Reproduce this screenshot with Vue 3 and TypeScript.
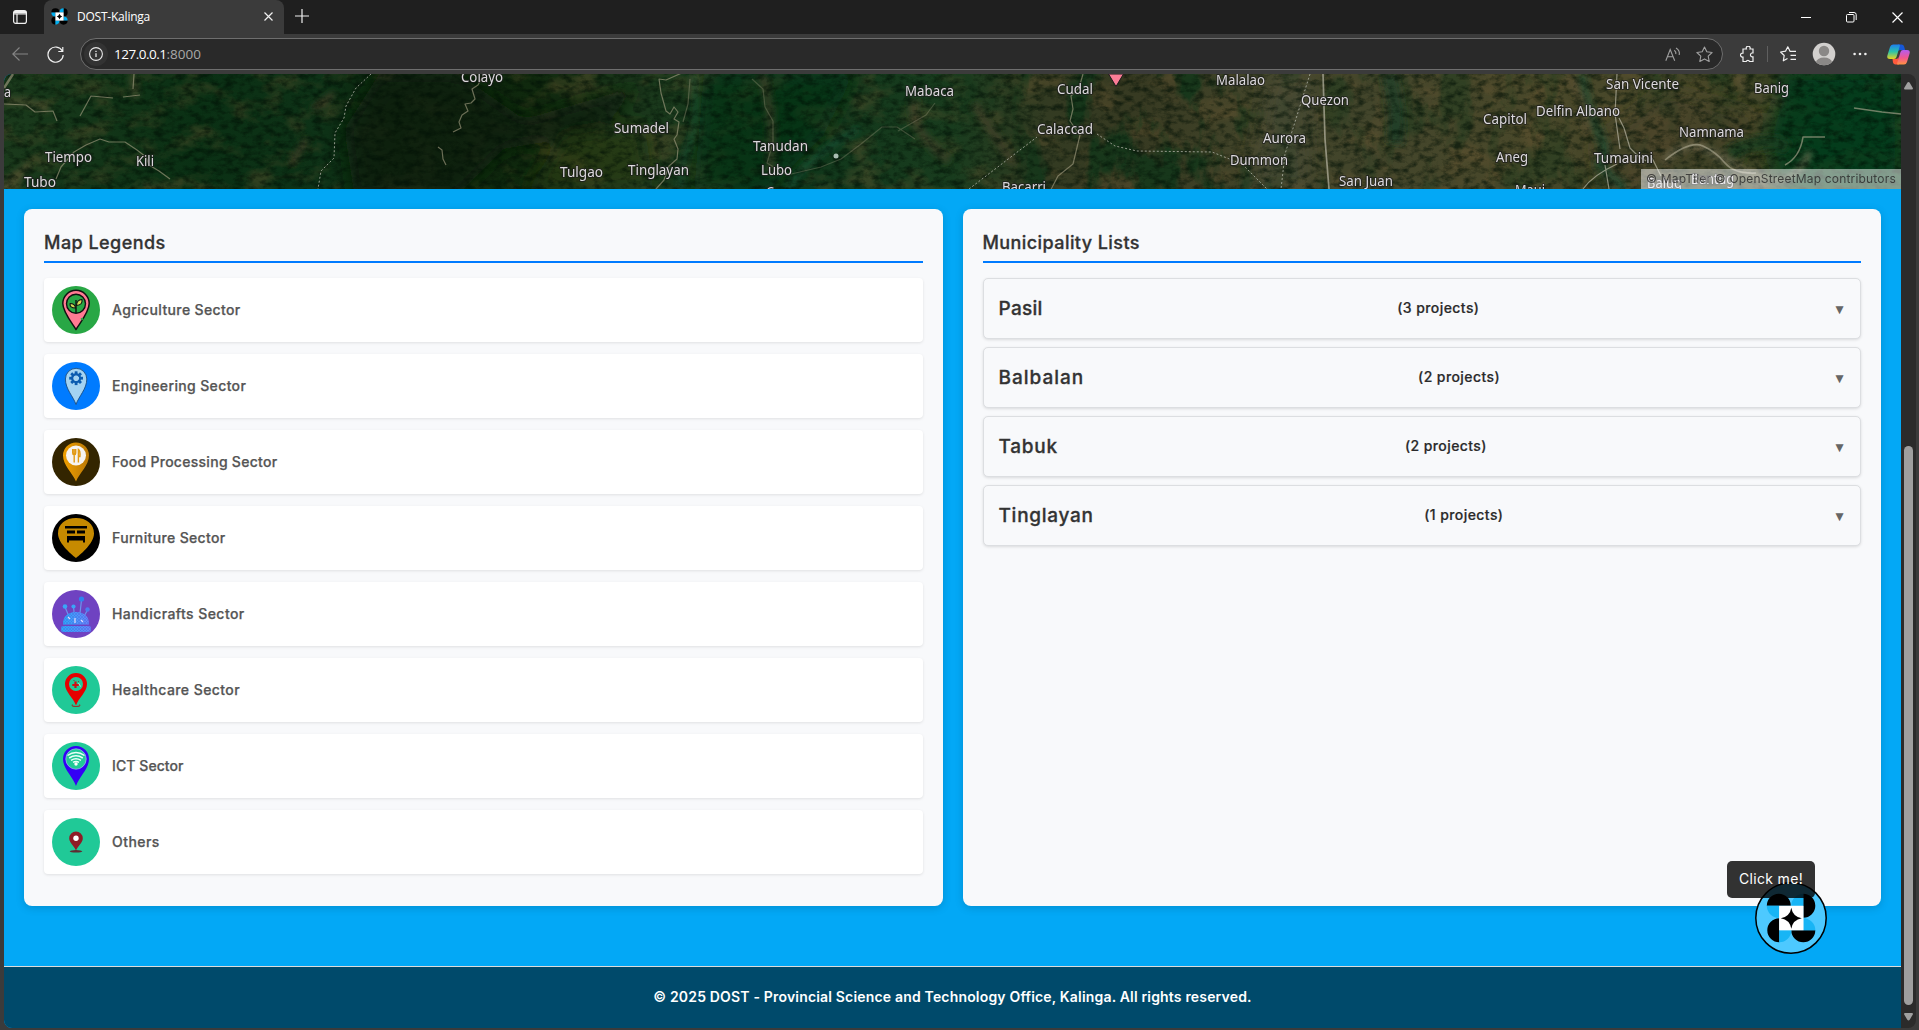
<script setup lang="ts">
interface Sector { id: string; name: string; bg: string; track: number }
interface Town { name: string; count: number; track: number }
interface Place { label: string; x: number; y: number; w: number }

const sectors: Sector[] = [
  { id: 'agri', name: 'Agriculture Sector', bg: '#28a745', track: 0.37 },
  { id: 'eng', name: 'Engineering Sector', bg: '#007bff', track: 0.36 },
  { id: 'food', name: 'Food Processing Sector', bg: '#332500', track: 0.28 },
  { id: 'furn', name: 'Furniture Sector', bg: '#000000', track: 0.36 },
  { id: 'hand', name: 'Handicrafts Sector', bg: '#6f42c1', track: 0.43 },
  { id: 'health', name: 'Healthcare Sector', bg: '#20c997', track: 0.43 },
  { id: 'ict', name: 'ICT Sector', bg: '#20c997', track: 0.08 },
  { id: 'other', name: 'Others', bg: '#20c997', track: 0.45 },
]
const towns: Town[] = [
  { name: 'Pasil', count: 3, track: 0.3 },
  { name: 'Balbalan', count: 2, track: 0.98 },
  { name: 'Tabuk', count: 2, track: 0.75 },
  { name: 'Tinglayan', count: 1, track: 0.72 },
]
const place = (label: string, x: number, y: number, w: number): Place => ({ label, x, y, w })
const places: Place[] = [
  place('a', 0, 23, 7), place('Tiempo', 41, 88, 47), place('Kili', 132, 92, 18), place('Tubo', 20, 113, 32),
  place('Colayo', 457, 8, 42), place('Sumadel', 610, 59, 55), place('Tanudan', 749, 77, 55), place('Lubo', 757, 101, 31),
  place('Tulgao', 556, 102.5, 43), place('Tinglayan', 624, 101, 61), place('Mabaca', 901, 22, 49), place('C', 762, 123, 8),
  place('Cudal', 1053, 20, 36), place('Calaccad', 1033, 60, 56), place('Malalao', 1212, 11, 49), place('Quezon', 1297, 31, 48),
  place('Aurora', 1259, 69, 43), place('Dummon', 1226, 91, 58), place('San Juan', 1335, 112, 54), place('Capitol', 1479, 50, 44),
  place('Delfin Albano', 1532, 42, 84), place('Aneg', 1492, 88, 32), place('Maui', 1511, 121, 30), place('Bacarri', 998, 118, 44),
  place('San Vicente', 1602, 14.5, 73), place('Banig', 1750, 18.5, 35), place('Namnama', 1675, 63, 65), place('Tumauini', 1590, 88.5, 59),
  place('Baluq', 1643, 114, 35), place('Bantug', 1687, 109.5, 43),
]
const gearTeeth = [0, 45, 90, 135, 180, 225, 270, 315]
</script>

<template>
  <div class="window">
    <header class="tabstrip">
      <svg class="workspaces" width="16" height="16" viewBox="0 0 16 16" fill="none" stroke="#f0f0f0" stroke-width="1.2">
        <rect x="1.6" y="1.6" width="12.8" height="12.8" rx="2.2" /><path d="M1.6 3.6h12.8M1.6 5h12.8M5 5v9.4" />
        <path d="M2 3h12" stroke-width="2" />
      </svg>
      <div class="tab">
        <svg class="favicon" width="17" height="17" viewBox="0 0 50 50">
          <path fill="#000" d="M1 13a12 12 0 0 1 24 0zM37 1a12 12 0 0 1 0 24zM49 37a12 12 0 0 1-24 0zM13 49a12 12 0 0 1 0-24z" />
          <path fill="#00aeef" d="M1 13h12v12A12 12 0 0 1 1 13zM37 1v12H25A12 12 0 0 1 37 1zM49 37H37V25a12 12 0 0 1 12 12zM13 49V37h12a12 12 0 0 1-12 12z" />
          <rect x="13" y="13" width="24" height="24" fill="#fff" /><path fill="#000" d="M25 17l3 5 5 3-5 3-3 5-3-5-5-3 5-3z" />
        </svg>
        <span class="tab-title">DOST-Kalinga</span>
        <svg width="9" height="9" viewBox="0 0 9 9" stroke="#f0f0f0" stroke-width="1.2"><path d="M.5.5l8 8M8.500.5l-8 8" /></svg>
      </div>
      <svg class="newtab" width="14" height="14" viewBox="0 0 14 14" stroke="#f0f0f0" stroke-width="1.2"><path d="M7 0v14M0 7h14" /></svg>
      <div class="winbtns">
        <svg width="10" height="11" viewBox="0 0 10 11" stroke="#fff"><path d="M0 5.500h10" /></svg>
        <svg width="11" height="11" viewBox="0 0 11 11" fill="none" stroke="#fff"><rect x=".5" y="2.500" width="7.500" height="7.500" rx="1" /><path d="M3 .5h5a2.200 2.200 0 0 1 2.200 2.200V8" /></svg>
        <svg width="11" height="11" viewBox="0 0 11 11" stroke="#fff" stroke-width="1.200"><path d="M.5.5l10 10M10.500.5l-10 10" /></svg>
      </div>
    </header>

    <div class="toolbar">
      <svg class="back" width="16" height="14" viewBox="0 0 16 14" fill="none" stroke="#858585" stroke-width="1.100"><path d="M7.500.5L.8 7l6.700 6.500M.8 7H16" /></svg>
      <svg class="reload" width="18" height="17" viewBox="0 0 18 17" fill="none" stroke="#f0f0f0" stroke-width="1.200"><path d="M15.300 5A7.600 7.600 0 1 0 16.200 9M15.800 1v4.500H11.300" /></svg>
      <div class="address">
        <span class="info">
          <svg width="14" height="14" viewBox="0 0 14 14" fill="none" stroke="#e8e8e8"><circle cx="7" cy="7" r="6.400" stroke-width="1.100" /><path d="M7 6.300V10" stroke-width="1.300" /><circle cx="7" cy="4.300" r=".4" /></svg>
        </span>
        <span class="url"><span class="host">127.0.0.1</span><span class="port">:8000</span></span>
        <svg class="read" width="16" height="15" viewBox="0 0 16 15" fill="none" stroke="#a0a0a0" stroke-width="1.100"><path d="M.8 13.800L5.200 2.500l4.500 11.300M2.400 9.800h5.700M9.300 3.200Q11.300 4.800 10.800 7.200M11 1q4.200 2.600 3.200 7" /></svg>
        <svg class="star" width="17" height="17" viewBox="0 0 17 17" fill="none" stroke="#a0a0a0" stroke-width="1.100" stroke-linejoin="round"><path d="M8.500 1l2.300 4.800 5.300.7-3.900 3.700 1 5.300-4.700-2.600-4.700 2.600 1-5.300L.9 6.500l5.300-.7z" /></svg>
      </div>
      <svg class="ext" width="16" height="17" viewBox="0 0 16 17" fill="none" stroke="#f0f0f0" stroke-width="1.200"><path d="M3 3h3.400a2 2 0 1 1 3.600 0H13v4h-1.200a2 2 0 0 0 0 3.800H13v4.700H9.600a1.800 1.800 0 0 0-3.400 0H3v-4.400H2.500a2 2 0 1 1 0-4H3z" /></svg>
      <span class="divider"></span>
      <svg class="favs" width="17" height="16" viewBox="0 0 17 16" fill="none" stroke="#f0f0f0" stroke-width="1.200" stroke-linejoin="round"><path d="M16 5.300H10l-2.200-4.500L5.500 5.200.6 6l3.600 3.500-.9 5.300 4.200-2.400M10.500 9.300H16M10.500 13.300H16" /></svg>
      <svg class="avatar" width="24" height="24" viewBox="0 0 24 24">
        <clipPath id="av"><circle cx="12" cy="12" r="11.300" /></clipPath>
        <circle cx="12" cy="12" r="11.300" fill="#d2d0ce" /><g clip-path="url(#av)" fill="#8a8886"><circle cx="12" cy="9" r="5.200" /><ellipse cx="12" cy="20.500" rx="8" ry="5" /></g>
      </svg>
      <svg class="dots" width="14" height="4" viewBox="0 0 14 4" fill="#f0f0f0"><circle cx="1.600" cy="2" r="1.300" /><circle cx="7" cy="2" r="1.300" /><circle cx="12.400" cy="2" r="1.300" /></svg>
      <svg class="copilot" width="23" height="21" viewBox="0 0 23 21">
        <defs>
          <linearGradient id="cpa" x1="0" y1="0" x2="0" y2="1"><stop offset="0" stop-color="#1d7ff0" /><stop offset=".5" stop-color="#2cc3a8" /><stop offset="1" stop-color="#ead31f" /></linearGradient>
          <linearGradient id="cpb" x1="0" y1="0" x2="0" y2="1"><stop offset="0" stop-color="#b45cf0" /><stop offset=".55" stop-color="#f2578f" /><stop offset="1" stop-color="#ff9340" /></linearGradient>
        </defs>
        <path fill="#1657d8" d="M11 .5h3.500q2 0 2.600 2l1 3.500h-5q-2 0-2.600 2z" />
        <path fill="url(#cpa)" d="M6 .5h6q1.200 0 .8 1.500L9.500 13q-.6 2-2.500 2H3q-3.500 0-2.600-3.500L3 3Q3.800.5 6 .5z" />
        <path fill="#ff5a3c" d="M12 20.500H8.500q-2 0-2.500-2L5.500 15H9q2 0 2.500-2z" />
        <path fill="url(#cpb)" d="M17 20.500h-6q-1.200 0-.8-1.500L13.500 8q.6-2 2.500-2h4q3.500 0 2.600 3.500L20 18q-.8 2.500-3 2.500z" />
      </svg>
    </div>

    <div class="viewport">
      <div class="page">
        <section class="map">
          <svg class="terrain" width="1897" height="115" viewBox="0 0 1897 115">
            <defs>
              <linearGradient id="land" x1="0" x2="1" y1="0" y2="0">
                <stop offset="0" stop-color="#1b3a1c" /><stop offset=".1" stop-color="#0a3014" /><stop offset=".17" stop-color="#0e3217" />
                <stop offset=".2" stop-color="#0c260d" /><stop offset=".28" stop-color="#10290e" /><stop offset=".33" stop-color="#1c391c" />
                <stop offset=".42" stop-color="#10371b" /><stop offset=".5" stop-color="#193c1e" /><stop offset=".55" stop-color="#333b22" />
                <stop offset=".6" stop-color="#373a22" /><stop offset=".66" stop-color="#43452a" /><stop offset=".72" stop-color="#42452b" />
                <stop offset=".8" stop-color="#49482a" /><stop offset=".87" stop-color="#48482a" /><stop offset=".93" stop-color="#3a4223" />
                <stop offset=".955" stop-color="#0e3d1e" /><stop offset="1" stop-color="#0e3d1e" />
              </linearGradient>
              <filter id="grain" x="0" y="0" width="100%" height="100%" color-interpolation-filters="sRGB">
                <feTurbulence type="fractalNoise" baseFrequency=".1 .16" numOctaves="5" seed="8" />
                <feColorMatrix values="0 0 0 0 0  0 0 0 0 .06  0 0 0 0 .02  2.600 0 0 0 -1.100" />
              </filter>
              <filter id="soil" x="0" y="0" width="100%" height="100%" color-interpolation-filters="sRGB">
                <feTurbulence type="fractalNoise" baseFrequency=".025 .04" numOctaves="5" seed="21" />
                <feColorMatrix values="0 0 0 0 .42  0 0 0 0 .34  0 0 0 0 .2  0 3.400 0 0 -1.650" />
              </filter>
              <filter id="forest" x="0" y="0" width="100%" height="100%" color-interpolation-filters="sRGB">
                <feTurbulence type="fractalNoise" baseFrequency=".03 .016" numOctaves="6" seed="5" />
                <feColorMatrix values="0 0 0 0 .06  0 0 0 0 .21  0 0 0 0 .1  0 0 6 0 -3" />
              </filter>
              <linearGradient id="fade" x1="0" x2="1" y1="0" y2="0">
                <stop offset=".49" stop-color="#000" /><stop offset=".55" stop-color="#fff" /><stop offset=".63" stop-color="#fff" />
                <stop offset=".68" stop-color="#777" /><stop offset="1" stop-color="#888" />
              </linearGradient>
              <mask id="east"><rect width="1897" height="115" fill="url(#fade)" /></mask>
              <filter id="soft" x="-30%" y="-30%" width="160%" height="160%"><feGaussianBlur stdDeviation="9" /></filter>
              <filter id="mist" x="-30%" y="-30%" width="160%" height="160%"><feGaussianBlur stdDeviation="3" /></filter>
            </defs>
            <rect width="1897" height="115" fill="url(#land)" />
            <rect width="1897" height="115" filter="url(#soil)" opacity=".38" />
            <g mask="url(#east)"><rect width="1897" height="115" filter="url(#forest)" opacity=".8" /></g>
            <g filter="url(#soft)">
              <path d="M350 120L340 55 375 0H455L520 45 640 10 590 60 500 75 450 125z" fill="#0c2109" opacity=".85" />
              <path d="M520 120l40-60 80-10 10 65z" fill="#2b3c16" opacity=".6" />
              <path d="M700 0h150l-30 60-60 60h-70z" fill="#0a3018" opacity=".6" />
              <path d="M1780 0h117v115h-120l-15-50z" fill="#073a1b" opacity=".7" />
              <path d="M1265 0h45l-5 115h-60z" fill="#474b39" opacity=".6" />
              <path d="M1590 70l70-55 90 25-30 75h-120z" fill="#4a4329" opacity=".5" />
            </g>
            <g fill="none" filter="url(#mist)">
              <path d="M690 0q5 50-4 70t-10 45" stroke="#1e5b40" stroke-width="6" opacity=".5" />
              <path d="M784 115q10-25 70-60" stroke="#20654a" stroke-width="6" opacity=".5" />
              <path d="M758 0q14 50 8 100M910 25q-6 30 35 62M970 30l40 60" stroke="#53452e" stroke-width="8" opacity=".55" />
              <path d="M1385 0q10 40 6 70" stroke="#173f25" stroke-width="16" opacity=".75" />
              <path d="M1577 0q8 40 18 60t0 30l26 25" stroke="#1f4a30" stroke-width="9" opacity=".8" />
              <path d="M1563 0q24 35 18 60" stroke="#6a5639" stroke-width="8" opacity=".4" />
              <path d="M1736 0q0 25 42 28" stroke="#77664a" stroke-width="4" opacity=".5" />
              <path d="M1660 86q25-20 36-14t50 28 60-22" stroke="#726d54" stroke-width="6" opacity=".8" />
              <path d="M1725 80q40-20 60-6" stroke="#18401f" stroke-width="14" opacity=".8" />
              <path d="M0 28q25-4 45 8M0 115l25-25M128 0l4 24" stroke="#6d5b3c" stroke-width="7" opacity=".5" />
              <path d="M287 90l16-25M310 35l20-15" stroke="#5f4630" stroke-width="6" opacity=".6" />
            </g>
            <rect width="1897" height="115" filter="url(#grain)" opacity=".6" />
            <g fill="none" stroke-linejoin="round" stroke="#a09b7f" stroke-width="1.200" opacity=".65">
              <path d="M52 105l5-12 13-15 12-7 14-6 9 3 16 0 12 8 9 7 3 8 10 6 11 8" />
              <path d="M0 30l22 1 9 7 18-1 4 10M76 42l11-20 22 2M119 23l17-2M130 0l-1 15" />
              <path d="M0 14l9-14" stroke-width="2.500" />
              <path d="M480 0l-6 11-6 4 3 10-4 4-6 1 3 7-6 4-3 7 2 6-8 4M434 73l4 3 1 9 3 6" />
              <path d="M680 -2l-18 8-7-1 2 14 5 18 4 3 4-7 4 5-4 7 5 3-2 13-3 4 4 10-1 10-8 7-5 14-8 9-2 11" />
              <path d="M686 5l-2 25 -5 18" opacity=".6" />
              <path d="M748 5l11 10 2 18 8 14 0 22-6 20 20 12 34-8 20-8 20-15 21-17 15 0 18 12M894 57l28-16 9-12" opacity=".5" />
              <path d="M1079 0l-4 14-8 8 2 13-3 12 10 14-7 29-15 12-12 23" />
              <path d="M1319 0l2 65 4 50" stroke="#c2bfae" stroke-width="1.700" />
              <path d="M1613 0l-2 40 5 35M1615 44l5 10 6 20 8 8 8 5M1648 84l9 18M1579 115q10-14 34-25M1601 91l4 24" stroke="#c2bfae" />
              <path d="M1661 86q25-20 38-14t22 17 31 10M1781 91q15-8 18-28h22M1850 34l28 4 19 2" stroke="#aaa68e" stroke-width="1.600" />
            </g>
            <g fill="none" stroke="#a9aca0" stroke-width="1" stroke-dasharray="2 2" opacity=".85">
              <path d="M367 0l-15 14-10 18-2 12-9 15-1 25-13 13-3 18" /><path d="M965 115l68-52M1093 60l18 12 22 5 75 1 30 12 38 38M1306 0l-25 80-4 35" />
            </g>
            <circle cx="832" cy="82" r="2.500" fill="#a9bdb2" />
            <path d="M1104.500 0h15l-7.500 12.500z" fill="#fb7d96" stroke="#1a1a1a" />
            <g class="labels">
              <text v-for="p in places" :key="p.label + p.x" :x="p.x" :y="p.y" :textLength="p.w" lengthAdjust="spacingAndGlyphs">{{ p.label }}</text>
            </g>
          </svg>
          <div class="credit">© MapTiler © OpenStreetMap contributors</div>
        </section>

        <main class="cards">
          <section class="card">
            <h2 class="legend-title">Map Legends</h2>
            <ul class="legend">
              <li v-for="s in sectors" :key="s.id">
                <svg class="badge" width="48" height="48" viewBox="0 0 48 48" :style="{ background: s.bg }">
                  <g v-if="s.id === 'agri'" stroke="#111" stroke-linejoin="round">
                    <path d="M24 43.500C20 37 10.800 26 10.800 17.500a13.200 13.200 0 0 1 26.400 0C37.200 26 28 37 24 43.500z" fill="#ff7b93" stroke-width="1.500" />
                    <circle cx="24" cy="17.800" r="9.500" fill="#28a745" stroke-width="1.400" />
                    <path d="M24 27V14" stroke-width="1.400" /><path d="M23.500 22q-6 0-5.500-4.500 5 0 5.500 4.500zM24.500 19.500q0-5.500 5.500-6 .8 5.500-5.500 6z" fill="#d9dc58" stroke-width="1.100" />
                    <path d="M29 33.500l2-1" stroke="#28a745" stroke-width="2" />
                  </g>
                  <g v-else-if="s.id === 'eng'">
                    <path d="M24 42.500C21 34 13.400 27 13.400 17a10.700 10.700 0 0 1 21.400 0C34.800 27 27 34 24 42.500z" fill="#a3d3f2" stroke="#1b4d80" stroke-width=".9" />
                    <g fill="#0b5cb0"><rect v-for="a in gearTeeth" :key="a" x="22.700" y="9.300" width="2.800" height="4" :transform="`rotate(${a} 24.100 16.200)`" /></g>
                    <circle cx="24.100" cy="16.200" r="4" fill="none" stroke="#0b5cb0" stroke-width="2" />
                  </g>
                  <g v-else-if="s.id === 'food'">
                    <defs><linearGradient id="amber"><stop offset="0" stop-color="#f0a000" /><stop offset="1" stop-color="#b97806" /></linearGradient></defs>
                    <path d="M24 43.500C20.500 35 11 27 11 17.500a13 13 0 0 1 26 0C37 27 27.500 35 24 43.500z" fill="url(#amber)" />
                    <circle cx="24" cy="17.500" r="10" fill="#f6f4f2" />
                    <path d="M20.700 11v4q0 1.800 1.500 1.800T23.700 15v-4M22.200 11v13.500M26.400 24.500V11.500q2 1 1.500 7h-1.500" fill="none" stroke="#e29a13" stroke-width="1.400" />
                  </g>
                  <g v-else-if="s.id === 'furn'">
                    <path d="M24 44C21.500 42 6 30 6 19.500 6 10 13.500 4 24 4s18 6 18 15.500C42 30 26.500 42 24 44z" fill="#c68a00" />
                    <path d="M13 12h22v2.500H13zM15 16.500h8V19.500h-8zM25 16.500h8V19.500h-8zM15 22h18v6.500h-2v-2H17v2h-2z" fill="#000" />
                  </g>
                  <g v-else-if="s.id === 'hand'">
                    <defs>
                      <pattern id="weave" width="3" height="3" patternUnits="userSpaceOnUse"><path d="M0 0l3 3M3 0L0 3" stroke="#4a6ce6" stroke-width=".5" /></pattern>
                      <linearGradient id="cushion"><stop offset="0" stop-color="#24b0fa" /><stop offset="1" stop-color="#6c84fa" /></linearGradient>
                    </defs>
                    <path d="M13 17l5 12M21.500 17l1.500 14M29.500 10l-2 18M35.500 20l-6 11" stroke="#6b94ee" stroke-width="1.200" />
                    <path d="M11 34.500q0-12 13-12.500 13 .5 13 12.500z" fill="url(#cushion)" /><rect x="9" y="36" width="30" height="6" rx="3" fill="url(#cushion)" />
                    <path d="M11 34.500q0-12 13-12.500 13 .5 13 12.500zM9 36h30v6H9z" fill="url(#weave)" />
                    <g fill="#3aa5f7"><circle cx="13" cy="16.500" r="2.300" /><circle cx="21.500" cy="16.500" r="2.100" /><circle cx="29.500" cy="9" r="2.600" fill="#2e82f0" /><circle cx="35.500" cy="19.500" r="2.200" fill="#4a7cf2" /></g>
                    <path d="M18 29l-2-2M23 33v-5M31 32l-2-2" stroke="#e6ddfb" stroke-width="1.200" />
                  </g>
                  <g v-else-if="s.id === 'health'">
                    <path d="M24 39.500C21.500 32 13 26 13 18a11 11 0 0 1 22 0C35 26 26.500 32 24 39.500z" fill="#e60000" /><circle cx="24" cy="18" r="7" fill="#20c997" />
                    <path d="M23.500 15.500v6.500M20.300 19h6.500" stroke="#d20d12" stroke-width="2.200" /><path d="M21.500 14.500h1M26 15.500h1" stroke="#704a3a" /><path d="M26.500 17l2 3.500" stroke="#c9d9d0" />
                    <path d="M20.500 38.500q-1.500 2 3.500 2t3.500-2" fill="none" stroke="#8f3b32" stroke-width="1.100" />
                  </g>
                  <g v-else-if="s.id === 'ict'">
                    <path d="M24 44C20.500 34 11 27 11 17a13 13 0 0 1 26 0C37 27 27.500 34 24 44z" fill="#3400f5" /><circle cx="24" cy="17" r="10.200" fill="#20c997" stroke="#9fc4ef" stroke-width=".7" />
                    <g fill="none" stroke="#eafff8" stroke-width="1.500"><path d="M15.500 13.500q8.500-6 17 0M17.200 16q6.800-4.500 13.600 0M19 18.300q5-3 10 0M21 20.300q3-1.500 6 0" /></g><circle cx="24" cy="22" r="1.700" fill="#fff" />
                  </g>
                  <g v-else>
                    <ellipse cx="24" cy="33.300" rx="6.300" ry="1.200" fill="#5f2c31" />
                    <path d="M24 32.500C22.500 28 17.200 25 17.200 20.200a6.800 6.800 0 0 1 13.600 0C30.800 25 25.500 28 24 32.500z" fill="#8f1b26" /><circle cx="24" cy="20.200" r="2.700" fill="#fff" />
                  </g>
                </svg>
                <span class="sector" :style="{ letterSpacing: s.track + 'px' }">{{ s.name }}</span>
              </li>
            </ul>
          </section>

          <section class="card">
            <h2>Municipality Lists</h2>
            <div class="towns">
              <button v-for="t in towns" :key="t.name" type="button" class="town">
                <span class="name" :style="{ letterSpacing: t.track + 'px' }">{{ t.name }}</span>
                <span class="count">({{ t.count }} projects)</span>
                <span class="caret">▼</span>
              </button>
            </div>
          </section>
        </main>

        <footer>© 2025 DOST - Provincial Science and Technology Office, Kalinga. All rights reserved.</footer>
      </div>

      <div class="scrollbar">
        <svg width="9" height="8" viewBox="0 0 9 8" fill="#a0a0a0"><path d="M4.500 0q.7 0 1.200.8L8.800 6q.5 1.500-.8 1.500H1Q-.3 7.500.2 6L3.300.8Q3.800 0 4.500 0z" /></svg>
        <span class="thumb"></span>
        <svg width="9" height="8" viewBox="0 0 9 8" fill="#a0a0a0"><path d="M4.500 7.500q.7 0 1.200-.8L8.800 1.500Q9.300 0 8 0H1Q-.3 0 .2 1.500l3.100 5.200q.5.800 1.200.8z" /></svg>
      </div>
    </div>

    <svg class="fab" width="72" height="72" viewBox="0 0 72 72">
      <circle cx="36" cy="36" r="35.200" fill="#4dc9ff" stroke="#000" stroke-width="1.500" />
      <g transform="translate(11.300 11.300)">
        <path fill="#000" d="M.5 12.500a12 12 0 0 1 24 0zM37 .5a12 12 0 0 1 0 24zM49 37a12 12 0 0 1-24 0zM13 49a12 12 0 0 1 0-24z" />
        <path fill="#18b5f5" d="M.5 12.500H13v12A12 12 0 0 1 .5 12.500zM37 .5v12H25A12 12 0 0 1 37 .5zM49 37H37V25a12 12 0 0 1 12 12zM13 49V37h12a12 12 0 0 1-12 12z" />
        <rect x="12.800" y="12.500" width="24.400" height="24.500" fill="#fff" /><path fill="#000" d="M25 14.500Q26.500 23.500 35.500 25 26.500 26.500 25 35.500 23.500 26.500 14.500 25 23.500 23.500 25 14.500z" />
      </g>
    </svg>
    <div class="tip">Click me!</div>
  </div>
</template>

<style>
body { margin: 0; background: #3b3b3b; }
</style>

<style scoped>
* { box-sizing: border-box; }
svg { display: block; flex: none; }
.window { position: relative; width: 1919px; height: 1030px; overflow: hidden; background: #3b3b3b; display: flex; flex-direction: column; font-family: Inter, 'Open Sans', sans-serif; }
.tabstrip { height: 34px; background: #1f1f1f; display: flex; align-items: center; padding-left: 12px; flex: none; }
.tab { margin-left: 16px; width: 240px; height: 34px; background: #3b3b3b; border-radius: 8px 8px 0 0; display: flex; align-items: center; padding: 0 11px 2px 7px; }
.tab-title { flex: 1; margin-left: 9px; color: #fff; font: 12px 'Open Sans', sans-serif; letter-spacing: -0.22px; }
.newtab { margin: -2px 0 0 11px; }
.winbtns { margin-left: auto; display: flex; gap: 35px; padding-right: 16px; }
.toolbar { height: 40px; display: flex; align-items: center; padding-left: 12px; flex: none; }
.reload { margin-left: 19px; }
.address { margin-left: 15px; width: 1643px; height: 32px; background: #292929; border: 1px solid #6e6e6e; border-radius: 16px; display: flex; align-items: center; padding-left: 3px; }
.info { width: 24px; height: 24px; border-radius: 50%; background: #333; display: flex; align-items: center; justify-content: center; }
.url { margin-left: 6px; flex: 1; font: 13.500px 'Open Sans', sans-serif; }
.host { color: #fff; letter-spacing: -0.5px; }
.port { color: #a8a8a8; }
.star { margin: 0 9px 0 15px; }
.ext { margin-left: 17px; }
.divider { width: 1px; height: 16px; background: #5f5f5f; margin-left: 11px; }
.favs { margin-left: 12px; }
.avatar { margin-left: 15px; }
.dots { margin-left: 17px; }
.copilot { margin-left: 20px; }
.viewport { margin: 0 3px 0 4px; height: 954px; display: flex; border-radius: 8px; overflow: hidden; }
.page { width: 1897px; height: 954px; background: #03a8f6; display: flex; flex-direction: column; }
.map { position: relative; height: 115px; overflow: hidden; flex: none; }
.labels { font: 14px 'Noto Sans', sans-serif; fill: #dcd9dc; stroke: #1d1d1d; stroke-width: 2px; stroke-opacity: 0.75; paint-order: stroke; stroke-linejoin: round; }
.credit { position: absolute; right: 0; bottom: 0; width: 260px; height: 20px; padding: 0 5px; background: rgba(255, 255, 255, 0.5); color: rgba(40, 40, 40, 0.8); font-size: 12px; line-height: 20px; letter-spacing: 0.18px; white-space: nowrap; }
.cards { display: flex; gap: 20px; padding: 20px 20px 60px; height: 777px; }
.card { flex: 1; background: #f8f9fb; border-radius: 8px; padding: 20px; box-shadow: 0 2px 8px rgba(0, 0, 0, 0.15); }
h2 { margin: 0 0 15px; height: 34px; border-bottom: 2px solid #007bff; color: #333; font-size: 18px; font-weight: 500; line-height: 28px; letter-spacing: 0.42px; -webkit-text-stroke: 0.3px; }
.legend-title { letter-spacing: 0.46px; }
.legend { list-style: none; margin: 0; padding: 0; display: flex; flex-direction: column; gap: 12px; }
.legend li { height: 64px; background: #fff; border-radius: 4px; box-shadow: 0 1px 3px rgba(0, 0, 0, 0.1); padding: 0 8px; display: flex; align-items: center; gap: 12px; font-size: 14px; font-weight: 500; color: #555; -webkit-text-stroke: 0.25px; }
.sector { padding-bottom: 2px; }
.badge { border-radius: 50%; }
.towns { display: flex; flex-direction: column; gap: 8px; }
.town { height: 61px; background: #f8f9fb; border: 1px solid #dcdee1; border-radius: 5px; box-shadow: 0 1px 3px rgba(0, 0, 0, 0.12); padding: 0 15px; display: flex; align-items: center; justify-content: space-between; font-family: inherit; color: #333; -webkit-text-stroke: 0.3px; }
.name { font-size: 19px; font-weight: 500; }
.count { font-size: 14px; font-weight: 500; letter-spacing: 0.42px; color: #2a2a2a; padding-bottom: 2px; -webkit-text-stroke: 0.2px; }
.caret { width: 11px; color: #666; font: 10.500px 'DejaVu Sans', sans-serif; -webkit-text-stroke: 0; }
footer { height: 62px; border-top: 1px solid #ddd; background: #004a6b; color: #fff; text-align: center; font-size: 14px; font-weight: 600; line-height: 59px; letter-spacing: 0.177px; }
.scrollbar { width: 15px; background: #2b2b2b; display: flex; flex-direction: column; align-items: center; padding: 8px 0 7px; }
.thumb { width: 9px; height: 559px; margin: 356px 0 8px; background: #9f9f9f; border-radius: 5px; }
.fab { position: absolute; left: 1755px; top: 882px; }
.tip { position: absolute; left: 1727px; top: 861px; width: 88px; height: 37px; border-radius: 5px; background: rgba(0, 0, 0, 0.8); color: #fff; font-size: 14px; line-height: 35px; text-align: center; letter-spacing: 0.32px; }
</style>
